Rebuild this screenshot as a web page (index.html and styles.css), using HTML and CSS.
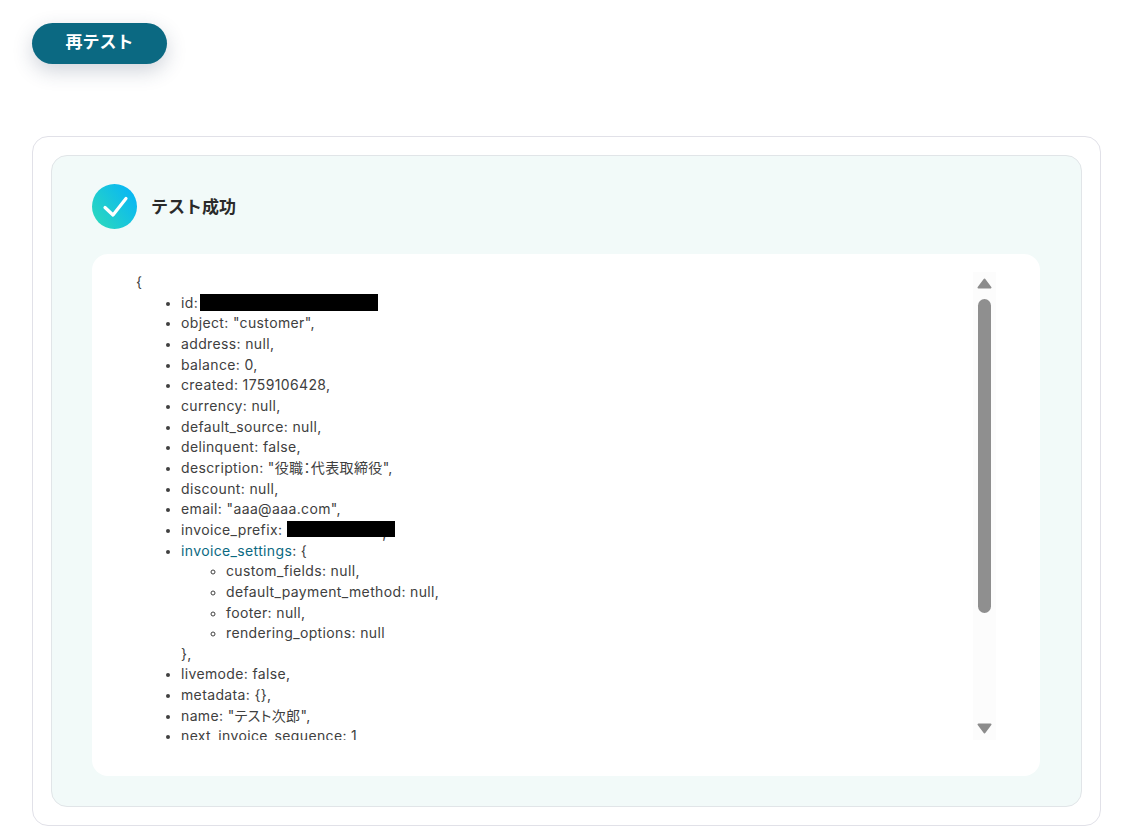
FILE: index.html
```html
<!DOCTYPE html>
<html lang="ja">
<head>
<meta charset="utf-8">
<title>テスト成功</title>
<link rel="stylesheet" href="styles.css">
</head>
<body>
<button class="retest" type="button"><span class="retest-label">再テスト</span></button>
<section class="outer">
  <div class="panel">
    <header class="status">
      <svg class="status-icon" viewBox="0 0 45 45" width="45" height="45" aria-hidden="true">
        <defs>
          <linearGradient id="g" x1="0" y1="1" x2="1" y2="0.25">
            <stop offset="0" stop-color="#2fdcb8"/>
            <stop offset="1" stop-color="#08b6f5"/>
          </linearGradient>
        </defs>
        <circle cx="22.5" cy="22.5" r="22.5" fill="url(#g)"/>
        <path d="M13 23.5 L21 31 L34 14.5" fill="none" stroke="#fff" stroke-width="3.2" stroke-linecap="round" stroke-linejoin="round"/>
      </svg>
      <h2 class="status-title">テスト成功</h2>
    </header>
    <div class="result">
      <div class="scroll">
        <div class="code">
          {
          <ul>
            <li>id: <span class="redact redact-id"></span></li>
            <li>object: "customer",</li>
            <li>address: null,</li>
            <li>balance: 0,</li>
            <li>created: 1759106428,</li>
            <li>currency: null,</li>
            <li>default_source: null,</li>
            <li>delinquent: false,</li>
            <li>description: "<span class="cjk">役職：代表取締役</span>",</li>
            <li>discount: null,</li>
            <li>email: "aaa@aaa.com",</li>
            <li>invoice_prefix: <span class="redact redact-prefix"><span class="tail">,</span></span></li>
            <li><a class="key-link" href="#">invoice_settings</a>: {
              <ul>
                <li>custom_fields: null,</li>
                <li>default_payment_method: null,</li>
                <li>footer: null,</li>
                <li>rendering_options: null</li>
              </ul>
              },
            </li>
            <li>livemode: false,</li>
            <li>metadata: {},</li>
            <li>name: "<span class="cjk">テスト次郎</span>",</li>
            <li>next_invoice_sequence: 1,</li>
            <li>phone: null,</li>
          </ul>
        </div>
      </div>
      <div class="scrollbar" aria-hidden="true">
        <svg class="arrow" viewBox="0 0 15 11" width="15" height="11"><path d="M7.5 1.5 L13.5 9.5 H1.5 Z" fill="#8c8c8c" stroke="#8c8c8c" stroke-width="2" stroke-linejoin="round"/></svg>
        <span class="thumb"></span>
        <svg class="arrow arrow-down" viewBox="0 0 15 11" width="15" height="11"><path d="M1.5 1.5 H13.5 L7.5 9.5 Z" fill="#8c8c8c" stroke="#8c8c8c" stroke-width="2" stroke-linejoin="round"/></svg>
      </div>
    </div>
  </div>
</section>
</body>
</html>
```

FILE: styles.css
```css
* { box-sizing: border-box; }
html, body { margin: 0; padding: 0; }
body {
  height: 834px;
  overflow: hidden;
  background: #fff;
  padding: 23px 21px 0 32px;
  font-family: Inter, "Noto Sans CJK JP", sans-serif;
  color: #333;
}
.retest {
  display: block;
  width: 135px;
  height: 41px;
  border: 0;
  border-radius: 21px;
  background: #0b6982;
  color: #fff;
  font-family: Inter, "Noto Sans CJK JP", sans-serif;
  font-size: 17px;
  font-weight: 700;
  line-height: 24px;
  box-shadow: 0 7px 20px rgba(40, 60, 90, 0.22);
  padding: 0 0 3px;
}
.retest-label { display: block; }
.outer {
  margin-top: 72px;
  height: 690px;
  border: 1px solid #e1e1e8;
  border-radius: 16px;
  padding: 18px;
  background: #fff;
}
.panel {
  height: 652px;
  border: 1px solid #e1e5e8;
  border-radius: 16px;
  background: #f2faf9;
  padding: 28px 41px 30px 40px;
}
.status {
  display: flex;
  align-items: center;
  gap: 14px;
  height: 45px;
}
.status-icon { flex: none; display: block; }
.status-title {
  margin: 0;
  padding-bottom: 2px;
  font-size: 17px;
  font-weight: 600;
  color: #2a2a2a;
}
.result {
  margin-top: 25px;
  height: 522px;
  background: #fff;
  border-radius: 16px;
  padding: 18px 44px 36px 44px;
  display: flex;
  gap: 6px;
}
.scroll {
  flex: 1;
  min-width: 0;
  height: 468px;
  overflow: hidden;
}
.code {
  font-size: 14px;
  line-height: 20.66px;
  letter-spacing: 0.36px;
  color: #404040;
}
.code ul {
  margin: 0;
  padding-left: 45px;
  list-style: disc;
}
.code ul ul { list-style: circle; }
.code li::marker { font-size: 12.5px; }
.cjk { font-feature-settings: "palt"; }
.redact {
  display: inline-block;
  background: #000;
  vertical-align: top;
  position: relative;
}
.redact-id { width: 178px; height: 17px; margin: 1px 0 0 -2px; }
.redact-prefix { width: 108px; height: 16px; margin-top: 1px; }
.tail {
  position: absolute;
  right: 8px;
  top: 2px;
  color: #404040;
}
.key-link { color: #0b6982; text-decoration: none; }
.scrollbar {
  flex: none;
  width: 23px;
  height: 468px;
  background: #fcfcfc;
  display: flex;
  flex-direction: column;
  align-items: center;
  padding-top: 6px;
}
.arrow {
  display: block;
  flex: none;
}
.arrow-down { margin-top: 110px; }
.thumb {
  display: block;
  flex: none;
  width: 13px;
  height: 314px;
  margin-top: 10px;
  border-radius: 7px;
  background: #8f8f8f;
}
```
